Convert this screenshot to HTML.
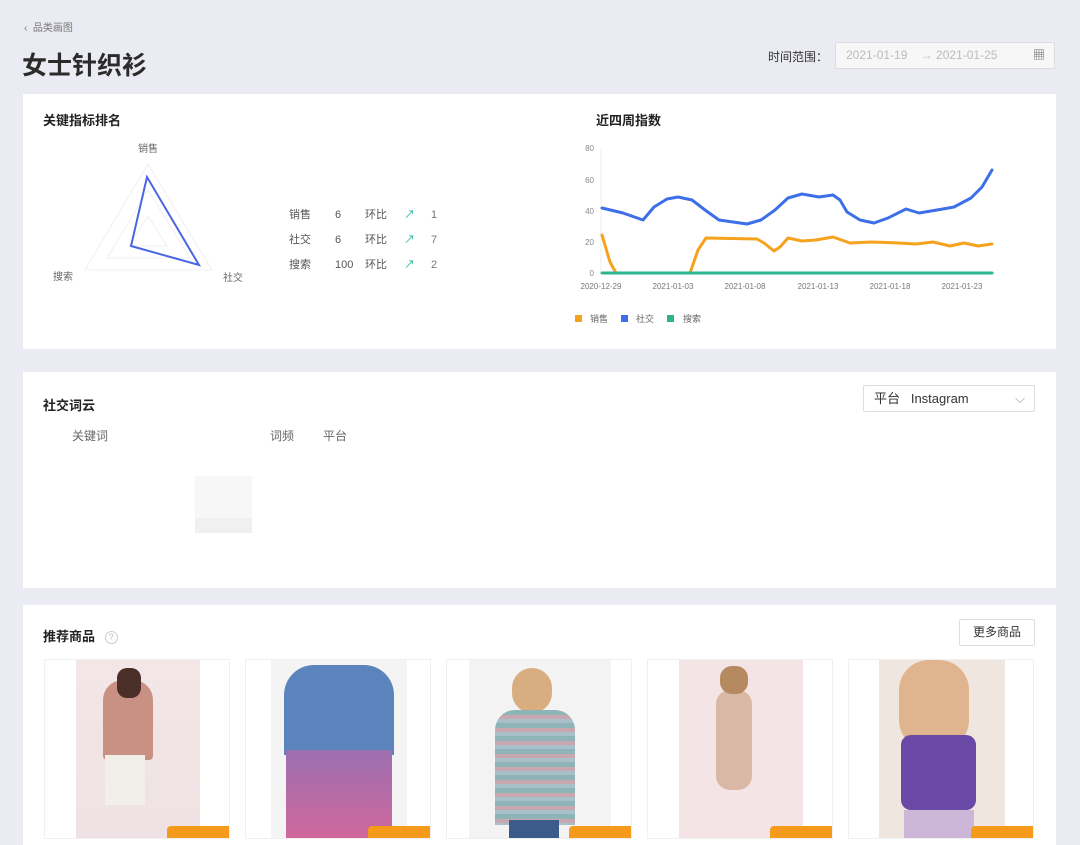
<!DOCTYPE html>
<html><head><meta charset="utf-8"><style>
*{margin:0;padding:0;box-sizing:border-box}
body{width:1080px;height:832px;overflow:hidden;background:#ebecf3;font-family:"Liberation Sans","Noto Sans CJK SC",sans-serif;position:relative;color:#333}
.a{position:absolute}
.card{position:absolute;background:#fff;left:23px;width:1033px}
.t{font-size:13px;font-weight:bold;color:#222}
.s{font-size:11px;color:#555}
.g{font-size:12px;color:#666}
.pc{position:absolute;top:659px;width:186px;height:180px;background:#fff;border:1px solid #f0f0f0;overflow:hidden}
.img{position:absolute;top:0;height:180px}
.price{position:absolute;bottom:0;right:0;width:62px;height:12px;background:#f59a1b;border-radius:4px 0 0 0}
</style></head><body>
<div class="a" style="left:24px;top:19px;font-size:10px;color:#777">‹&nbsp;&nbsp;品类画图</div>
<div class="a" style="left:22px;top:46px;font-size:25px;font-weight:bold;color:#2b2b2b">女士针织衫</div>
<div class="a" style="left:768px;top:48px;font-size:12px;color:#333">时间范围：</div>
<div class="a" style="left:835px;top:42px;width:220px;height:27px;border:1px solid #ddd;background:#f7f7f7;border-radius:2px;font-size:12px;color:#bbb;line-height:25px;padding-left:10px">2021-01-19 &nbsp;&nbsp;&nbsp;→ 2021-01-25<span style="position:absolute;right:9px;top:0;color:#666">&#9638;</span></div>

<div class="card" style="top:94px;height:255px"></div>
<div class="a t" style="left:43px;top:110px">关键指标排名</div>
<svg class="a" style="left:40px;top:140px" width="220" height="150">
<g fill="none" stroke="#f0f0f0" stroke-width="1">
<polygon points="108,24 45,130 172,130"/><polygon points="108,50 67,118 150,118"/><polygon points="108,76 89,106 127,106"/>
</g>
<polygon points="107,37 91,106 159,125" fill="none" stroke="#4a66e0" stroke-width="2"/>
<text x="98" y="12" font-size="10" fill="#666">销售</text>
<text x="13" y="140" font-size="10" fill="#666">搜索</text>
<text x="183" y="141" font-size="10" fill="#666">社交</text>
</svg>
<div class="a s" style="left:289px;top:203px;line-height:25px">销售<br>社交<br>搜索</div>
<div class="a s" style="left:335px;top:203px;line-height:25px">6<br>6<br>100</div>
<div class="a s" style="left:365px;top:203px;line-height:25px">环比<br>环比<br>环比</div>
<div class="a s" style="left:404px;top:203px;line-height:25px;color:#2bb59a">↗<br>↗<br>↗</div>
<div class="a s" style="left:431px;top:203px;line-height:25px;color:#777">1<br>7<br>2</div>

<div class="a t" style="left:596px;top:110px">近四周指数</div>
<svg class="a" style="left:570px;top:140px" width="440" height="190">
<g font-size="8" fill="#888" text-anchor="end">
<text x="24" y="11">80</text><text x="24" y="43">60</text><text x="24" y="74">40</text><text x="24" y="105">20</text><text x="24" y="136">0</text>
</g>
<line x1="31" y1="8" x2="31" y2="133" stroke="#eee"/>
<g font-size="8" fill="#777" text-anchor="middle">
<text x="31" y="149">2020-12-29</text><text x="103" y="149">2021-01-03</text><text x="175" y="149">2021-01-08</text><text x="248" y="149">2021-01-13</text><text x="320" y="149">2021-01-18</text><text x="392" y="149">2021-01-23</text>
</g>
<g transform="translate(-570,-140)" fill="none" stroke-width="3" stroke-linejoin="round" stroke-linecap="round">
<polyline stroke="#3d6fe8" points="602,208 623,213 643,220 654,207 667,199 678,197 692,200 705,210 719,220 733,222 747,224 761,220 775,210 788,198 802,194 819,197 833,195 840,200 847,212 860,220 874,223 888,218 906,209 919,213 937,210 954,207 971,198 982,187 992,170"/>
<polyline stroke="#f5a21d" points="602,235 610,262 616,273 690,273 698,250 706,238 757,239 764,243 774,251 780,247 788,238 802,241 816,240 833,237 850,243 871,242 899,243 916,244 933,242 950,246 964,243 978,246 992,244"/>
<polyline stroke="#2bb58f" points="602,273 992,273"/>
</g>
<rect x="5" y="175" width="7" height="7" fill="#f5a21d"/><text x="20" y="182" font-size="9" fill="#666">销售</text>
<rect x="51" y="175" width="7" height="7" fill="#3d6fe8"/><text x="66" y="182" font-size="9" fill="#666">社交</text>
<rect x="97" y="175" width="7" height="7" fill="#2bb58f"/><text x="113" y="182" font-size="9" fill="#666">搜索</text>
</svg>

<div class="card" style="top:372px;height:216px"></div>
<div class="a t" style="left:43px;top:395px">社交词云</div>
<div class="a g" style="left:72px;top:427px">关键词</div>
<div class="a g" style="left:270px;top:427px">词频</div>
<div class="a g" style="left:323px;top:427px">平台</div>
<div class="a" style="left:195px;top:476px;width:57px;height:57px;background:#f7f7f7"></div>
<div class="a" style="left:195px;top:518px;width:57px;height:15px;background:#f0f0f0"></div>
<div class="a" style="left:863px;top:385px;width:172px;height:27px;border:1px solid #ddd;border-radius:2px;font-size:13px;line-height:25px;padding-left:10px;color:#333">平台 &nbsp; Instagram<span style="position:absolute;right:9px;top:0;color:#999">⌵</span></div>

<div class="card" style="top:605px;height:240px"></div>
<div class="a t" style="left:43px;top:626px">推荐商品 <span style="display:inline-block;width:13px;height:13px;border:1px solid #ccc;border-radius:50%;font-size:9px;color:#bbb;text-align:center;line-height:11px;font-weight:normal;margin-left:6px;vertical-align:1px">?</span></div>
<div class="a" style="left:959px;top:619px;width:76px;height:27px;border:1px solid #ddd;border-radius:2px;font-size:12px;line-height:25px;text-align:center;color:#333">更多商品</div>

<div class="pc" style="left:44px"><div class="img" style="left:31px;width:124px;background:linear-gradient(#f3e6e6,#efe2e4)"></div>
<div class="img" style="left:58px;width:50px;top:20px;height:80px;background:#c99184;border-radius:20px 20px 4px 4px"></div>
<div class="img" style="left:72px;width:24px;top:8px;height:30px;background:#4a2f28;border-radius:10px"></div>
<div class="img" style="left:60px;width:40px;top:95px;height:50px;background:#f2eee9"></div>
<div class="price"></div></div>
<div class="pc" style="left:245px"><div class="img" style="left:25px;width:136px;background:#f4f4f4"></div>
<div class="img" style="left:38px;width:110px;top:5px;height:90px;background:#5c84bc;border-radius:30px 30px 0 0"></div>
<div class="img" style="left:40px;width:106px;top:90px;height:95px;background:linear-gradient(#9b6fb0,#d4679b)"></div>
<div class="price"></div></div>
<div class="pc" style="left:446px"><div class="img" style="left:22px;width:142px;background:#f3f3f3"></div>
<div class="img" style="left:65px;width:40px;top:8px;height:45px;background:#d8ad80;border-radius:20px"></div>
<div class="img" style="left:48px;width:80px;top:50px;height:115px;background:repeating-linear-gradient(#8fb4b8 0 5px,#c7a7b0 5px 9px,#a8c0c9 9px 13px);border-radius:20px 20px 0 0"></div>
<div class="img" style="left:62px;width:50px;top:160px;height:30px;background:#3b5b8a"></div>
<div class="price"></div></div>
<div class="pc" style="left:647px"><div class="img" style="left:31px;width:124px;background:#f5e4e6"></div>
<div class="img" style="left:68px;width:36px;top:30px;height:100px;background:#d9b8a6;border-radius:14px"></div>
<div class="img" style="left:72px;width:28px;top:6px;height:28px;background:#b58a60;border-radius:12px"></div>
<div class="price"></div></div>
<div class="pc" style="left:848px"><div class="img" style="left:30px;width:126px;background:#efe6e0"></div>
<div class="img" style="left:50px;width:70px;top:0;height:90px;background:#e0b48f;border-radius:30px"></div>
<div class="img" style="left:52px;width:75px;top:75px;height:75px;background:#6a48a5;border-radius:10px"></div>
<div class="img" style="left:55px;width:70px;top:150px;height:40px;background:#cdb7d8"></div>
<div class="price"></div></div>
</body></html>
